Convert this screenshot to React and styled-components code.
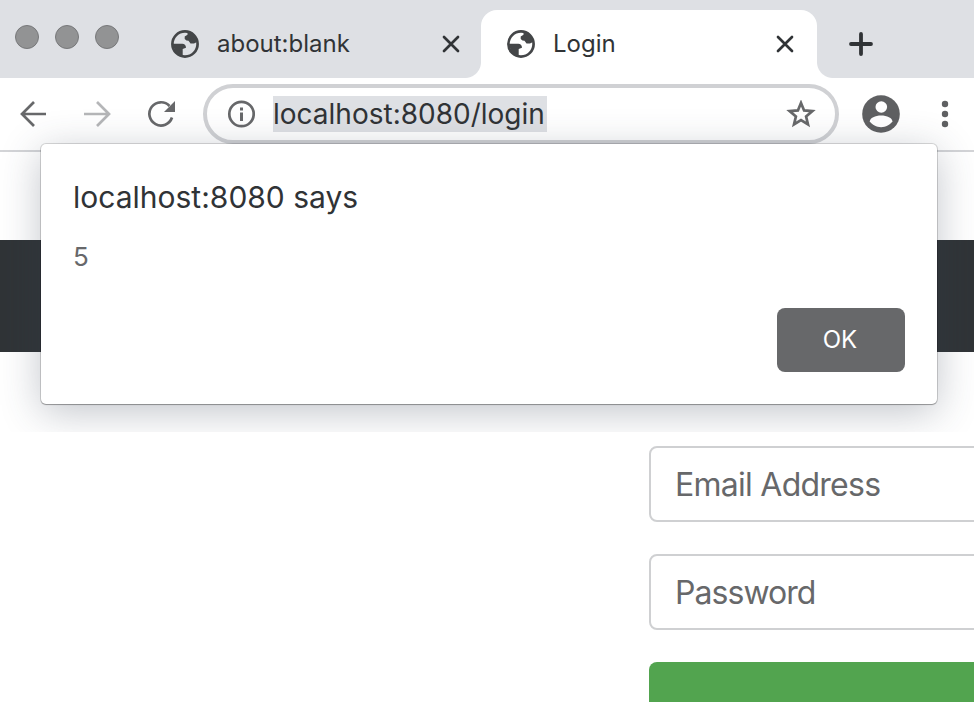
import React from "react";
import styled, { createGlobalStyle } from "styled-components";

const Global = createGlobalStyle`
  *, *::before, *::after { box-sizing: border-box; }
  html, body { margin: 0; padding: 0; overflow: hidden; background: #fff; }
  body { font-family: Inter, "Liberation Sans", sans-serif; color: #303336; }
  svg { display: block; flex: none; }
`;

const Window = styled.div`
  position: relative;
  width: 974px;
  height: 702px;
  overflow: hidden;
  background: #fff;
`;

const TabStrip = styled.header`
  display: flex;
  height: 78px;
  padding: 10px 0 0 15px;
  background: #dee0e4;
`;

const Lights = styled.div`
  display: flex;
  gap: 16px;
  width: 130px;
  padding-top: 15px;
`;

const Light = styled.span`
  width: 24px;
  height: 24px;
  border: 1px solid #77787a;
  border-radius: 50%;
  background: #929394;
`;

const Tab = styled.div`
  position: relative;
  display: flex;
  align-items: center;
  width: 336px;
  height: 68px;
  padding: 0 ${(p) => (p.$active ? 23 : 21)}px 0 26px;
  border-radius: 16px 16px 0 0;
  background: ${(p) => (p.$active ? "#fff" : "transparent")};

  &::before,
  &::after {
    content: "";
    display: ${(p) => (p.$active ? "block" : "none")};
    position: absolute;
    bottom: 0;
    width: 16px;
    height: 16px;
  }
  &::before {
    left: -16px;
    background: radial-gradient(circle at 0 0, transparent 15.5px, #fff 16.5px);
  }
  &::after {
    right: -16px;
    background: radial-gradient(circle at 100% 0, transparent 15.5px, #fff 16.5px);
  }
`;

const TabTitle = styled.span`
  flex: 1;
  margin-left: 18px;
  font-size: 24px;
  line-height: 30px;
`;

const NewTab = styled.div`
  padding: 22px 0 0 32px;
`;

const Toolbar = styled.nav`
  display: flex;
  align-items: center;
  height: 74px;
  padding-left: 17px;
  border-bottom: 2px solid #d3d4d7;
`;

const NavIcons = styled.div`
  display: flex;
  gap: 32px;
  width: 186px;
`;

const Omnibox = styled.div`
  display: flex;
  align-items: center;
  width: 636px;
  height: 60px;
  padding: 0 19px 0 20px;
  border: 4px solid #d0d1d4;
  border-radius: 30px;
`;

const UrlArea = styled.div`
  display: flex;
  flex: 1;
  margin-left: 18px;
`;

const Url = styled.span`
  width: 274px;
  height: 36px;
  background: #dee0e4;
  font-size: 28px;
  line-height: 36px;
  white-space: nowrap;
`;

const Actions = styled.div`
  display: flex;
  align-items: center;
  gap: 41px;
  margin-left: 23px;
`;

const Page = styled.main`
  padding-top: 88px;
`;

const Navbar = styled.div`
  height: 112px;
  background: #303437;
`;

const Form = styled.div`
  display: flex;
  flex-direction: column;
  gap: 32px;
  margin: 94px 0 0 649px;
  width: 420px;
`;

const Field = styled.div`
  height: 76px;
  padding-left: 24px;
  border: 2px solid #cfd0d2;
  border-radius: 8px;
  color: #67686a;
  font-size: 32px;
  line-height: 73px;
  letter-spacing: ${(p) => p.$spacing};
`;

const Submit = styled.div`
  height: 76px;
  border-radius: 8px;
  background: #52a44f;
`;

const DialogLayer = styled.div`
  position: absolute;
  top: 0;
  left: 0;
  width: 974px;
  height: 432px;
  padding: 144px 37px 0 41px;
  overflow: hidden;
`;

const Dialog = styled.section`
  display: flex;
  flex-direction: column;
  height: 260px;
  padding: 32px;
  border-radius: 5px;
  background: #fff;
  box-shadow: 0 0 0 1px rgba(0, 0, 0, 0.14), 0 1px 1px rgba(0, 0, 0, 0.25), 0 8px 40px rgba(50, 58, 80, 0.3);
`;

const Heading = styled.h1`
  margin: 0;
  font-size: 30px;
  font-weight: 400;
  line-height: 43px;
`;

const Message = styled.p`
  margin: 20px 0 0;
  color: #67686a;
  font-size: 26px;
  line-height: 36px;
`;

const OkButton = styled.button`
  align-self: flex-end;
  width: 128px;
  height: 64px;
  margin: auto 0 0;
  padding: 0 2px 2px 0;
  border: 0;
  border-radius: 8px;
  background: #67686a;
  color: #fff;
  font: 400 24px Inter, sans-serif;
`;

const Globe = () => (
  <svg width="28" height="28" viewBox="0 0 28 28">
    <circle cx="14" cy="14" r="12.6" fill="none" stroke="#444648" strokeWidth="2.700" />
    <path fill="#444648" d="M16.500 1.500v3.300l-2.800 1.700v2.500l1.800 1.500 2 .3 2 2.700h3.500l3.500-1.700L24 6z" />
    <path fill="#444648" d="M1.500 13.800h9.800c2 0 3.700 1.500 3.700 4l-3.300 1.200v7L5 23.500z" />
  </svg>
);

const Cross = () => (
  <svg width="18" height="18" viewBox="0 0 18 18" stroke="#303336" strokeWidth="2.7" strokeLinecap="round">
    <path d="M2 2l14 14M16 2L2 16" />
  </svg>
);

const Arrow = ({ flip, color }) => (
  <svg width="32" height="32" viewBox="0 0 32 32" fill="none" stroke={color} strokeWidth="2.700">
    <path d={flip ? "M3 16h25M16 4l12 12-12 12" : "M29 16H5M17 4L5 16l12 12"} />
  </svg>
);

const Reload = () => (
  <svg width="32" height="32" viewBox="0 0 32 32">
    <path d="M27 19.500a11.600 11.600 0 1 1-2.500-11.500" fill="none" stroke="#67686a" strokeWidth="2.700" />
    <path d="M30 3v11H19z" fill="#67686a" />
  </svg>
);

const Info = () => (
  <svg width="28" height="28" viewBox="0 0 28 28">
    <circle cx="14.500" cy="14" r="12.200" fill="none" stroke="#67686a" strokeWidth="2.700" />
    <path d="M13 7.500h3v3h-3zM13 12.500h3V21h-3z" fill="#67686a" />
  </svg>
);

const Star = () => (
  <svg width="30" height="28" viewBox="0 0 30 28">
    <path
      d="M15 2.900l3.100 7.500 8.300.7-6.300 5.400 1.900 8-7-4.300-7 4.300 1.900-8-6.300-5.400 8.300-.7z"
      fill="none"
      stroke="#67686a"
      strokeWidth="2.700"
    />
  </svg>
);

const Avatar = () => (
  <svg width="38" height="38" viewBox="0 0 38 38">
    <circle cx="19" cy="19" r="18.800" fill="#5f6062" />
    <circle cx="19.300" cy="12" r="5.800" fill="#fff" />
    <path d="M7.800 26.500c0-3.500 5.500-6 11.300-6s11.300 2.500 11.300 6c-2.500 3.400-6.500 5.700-11.300 5.700S10.300 29.900 7.800 26.500z" fill="#fff" />
  </svg>
);

const Dots = () => (
  <svg width="8" height="28" viewBox="0 0 8 28" fill="#5f6062">
    <circle cx="4" cy="4" r="3.200" />
    <circle cx="4" cy="14" r="3.200" />
    <circle cx="4" cy="24" r="3.200" />
  </svg>
);

export default function App() {
  return (
    <Window>
      <Global />
      <TabStrip>
        <Lights>
          <Light />
          <Light />
          <Light />
        </Lights>
        <Tab>
          <Globe />
          <TabTitle>about:blank</TabTitle>
          <Cross />
        </Tab>
        <Tab $active>
          <Globe />
          <TabTitle>Login</TabTitle>
          <Cross />
        </Tab>
        <NewTab>
          <svg width="24" height="24" viewBox="0 0 24 24" stroke="#303336" strokeWidth="3.800" strokeLinecap="round">
            <path d="M2 12h20M12 2v20" />
          </svg>
        </NewTab>
      </TabStrip>
      <Toolbar>
        <NavIcons>
          <Arrow color="#67686a" />
          <Arrow flip color="#b5b6b8" />
          <Reload />
        </NavIcons>
        <Omnibox>
          <Info />
          <UrlArea>
            <Url>localhost:8080/login</Url>
          </UrlArea>
          <Star />
        </Omnibox>
        <Actions>
          <Avatar />
          <Dots />
        </Actions>
      </Toolbar>
      <Page>
        <Navbar />
        <Form>
          <Field $spacing="-0.74px">Email Address</Field>
          <Field $spacing="-0.95px">Password</Field>
          <Submit />
        </Form>
      </Page>
      <DialogLayer>
        <Dialog role="dialog">
          <Heading>localhost:8080 says</Heading>
          <Message>5</Message>
          <OkButton>OK</OkButton>
        </Dialog>
      </DialogLayer>
    </Window>
  );
}
